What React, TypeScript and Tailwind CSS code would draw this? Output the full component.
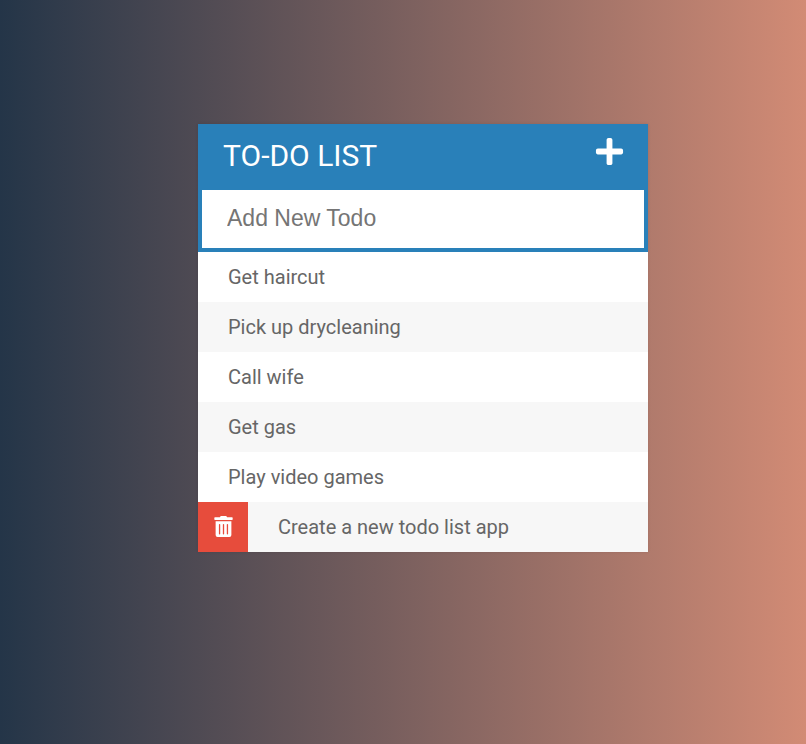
import { useState, type FormEvent } from "react";
import { FaPlus, FaTrashAlt } from "react-icons/fa";

const initialTodos = [
  "Get haircut",
  "Pick up drycleaning",
  "Call wife",
  "Get gas",
  "Play video games",
  "Create a new todo list app",
];

export default function App() {
  const [todos, setTodos] = useState(initialTodos);
  const [hovered, setHovered] = useState(initialTodos.length - 1);
  const [formOpen, setFormOpen] = useState(true);
  const [draft, setDraft] = useState("");

  function addTodo(event: FormEvent) {
    event.preventDefault();
    if (draft.trim()) {
      setTodos([...todos, draft.trim()]);
      setDraft("");
    }
  }

  return (
    <div className="min-h-screen bg-linear-to-r/srgb from-[#243548] to-[#d28b75] py-31 pl-10 font-['Roboto',sans-serif]">
      <main className="mx-auto w-full max-w-[450px] bg-[#f7f7f7] shadow-[0_0_3px_rgba(0,0,0,0.1)]">
        <header className="flex h-[62px] items-center justify-between bg-[#2980b9] pr-[23px] pl-[25px] text-white">
          <h1 className="pt-0.5 text-3xl font-normal uppercase">To-Do List</h1>
          <button type="button" aria-label="Toggle new todo form" className="pb-2" onClick={() => setFormOpen(!formOpen)}>
            <FaPlus size={31} />
          </button>
        </header>
        {formOpen && (
          <form onSubmit={addTodo}>
            <input
              type="text"
              aria-label="Add New Todo"
              placeholder="Add New Todo"
              value={draft}
              onChange={(event) => setDraft(event.target.value)}
              className="block h-[66px] w-full border-4 border-[#2980b9] bg-white px-[25px] pb-0.5 font-['Liberation_Sans',sans-serif] text-[23px] text-[#2980b9] outline-none placeholder:text-[#757575]"
            />
          </form>
        )}
        <ul>
          {todos.map((todo, index) => (
            <li
              key={index}
              onMouseEnter={() => setHovered(index)}
              className="flex h-[50px] items-center bg-[#f7f7f7] text-xl text-[#666] odd:bg-white"
            >
              {hovered === index && (
                <button
                  type="button"
                  aria-label={`Delete ${todo}`}
                  onClick={() => setTodos(todos.filter((_, i) => i !== index))}
                  className="flex size-[50px] items-center justify-center bg-[#e74c3c] pb-px text-white"
                >
                  <FaTrashAlt size={21} />
                </button>
              )}
              <span className="pl-[30px]">{todo}</span>
            </li>
          ))}
        </ul>
      </main>
    </div>
  );
}
